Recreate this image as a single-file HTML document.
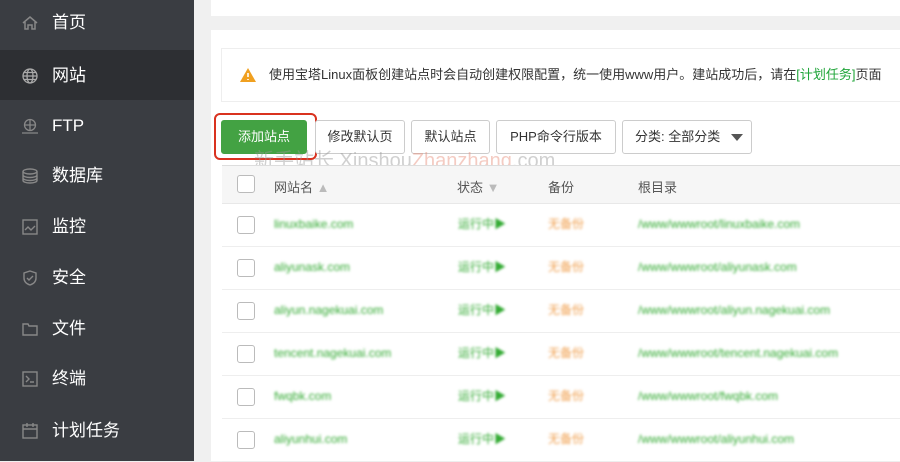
<!DOCTYPE html>
<html><head><meta charset="utf-8"><style>
*{margin:0;padding:0;box-sizing:border-box}
body{width:900px;height:461px;overflow:hidden;background:#f0f0f0;font-family:"Liberation Sans","Noto Sans CJK SC",sans-serif;position:relative}
.side{position:absolute;left:0;top:0;width:194px;height:461px;background:#3a3d42}
.item{position:absolute;left:0;width:194px;height:50px;color:#fff;font-size:17px}
.item span{position:absolute;left:52px;top:14px;line-height:24px}
.item svg{position:absolute;left:22px;top:18px}
.act{background:#2d2f33}
.p1{position:absolute;left:211px;top:0;width:689px;height:16px;background:#fff}
.p2{position:absolute;left:211px;top:30px;width:689px;height:431px;background:#fff}
.alert{position:absolute;left:221px;top:48px;width:679px;height:54px;border:1px solid #eee;border-right:none;background:#fff;font-size:13px;color:#333;padding-left:47px;line-height:52px;white-space:nowrap;overflow:hidden}
.btn{position:absolute;top:120px;height:34px;border:1px solid #ccc;border-radius:3px;background:#fff;font-size:13px;color:#333;line-height:32px;text-align:center}
.hdr{position:absolute;left:222px;top:165px;width:678px;height:39px;background:#f6f6f6;border-top:1px solid #ddd;border-bottom:1px solid #e8e8e8;font-size:13px;color:#555}
.row{position:absolute;left:222px;width:678px;height:43px;border-bottom:1px solid #eee;font-size:12px}
.cb{position:absolute;left:15px;width:18px;height:18px;border:1px solid #bbb;border-radius:3px;background:#fff}
.bl{position:absolute;top:12px;line-height:16px;filter:blur(1.3px);white-space:nowrap}
</style></head><body>
<div class="side">
<div class="item" style="top:-3px"><svg width="16" height="16" viewBox="0 0 16 16" fill="none" stroke="#888" stroke-width="1.5"><path d="M1 8L8 2l7 6M3 7v7h3v-4h4v4h3V7"/></svg><span>首页</span></div>
<div class="item act" style="top:50px"><svg width="16" height="16" viewBox="0 0 16 16" fill="none" stroke="#aaa" stroke-width="1.3"><circle cx="8" cy="8" r="7"/><ellipse cx="8" cy="8" rx="3" ry="7"/><path d="M1 8h14M2 4.5h12M2 11.5h12"/></svg><span>网站</span></div>
<div class="item" style="top:100px"><svg width="16" height="16" viewBox="0 0 16 16" fill="none" stroke="#888" stroke-width="1.3"><circle cx="8" cy="7" r="5.5"/><path d="M2.5 7h11M8 1.5v11M0 15h16"/></svg><span>FTP</span></div>
<div class="item" style="top:150px"><svg width="16" height="16" viewBox="0 0 16 16" fill="none" stroke="#888" stroke-width="1.4"><ellipse cx="8" cy="3.5" rx="7" ry="2.5"/><path d="M1 3.5v9c0 1.4 3 2.5 7 2.5s7-1.1 7-2.5v-9M1 7c0 1.4 3 2.5 7 2.5s7-1.1 7-2.5M1 10c0 1.4 3 2.5 7 2.5s7-1.1 7-2.5"/></svg><span>数据库</span></div>
<div class="item" style="top:201px"><svg width="16" height="16" viewBox="0 0 16 16" fill="none" stroke="#888" stroke-width="1.4"><rect x="1" y="1" width="14" height="14"/><path d="M3 11l3-3 3 3 4-4"/></svg><span>监控</span></div>
<div class="item" style="top:252px"><svg width="16" height="16" viewBox="0 0 16 16" fill="none" stroke="#888" stroke-width="1.4"><path d="M8 1l6 2v5c0 4-3 6-6 7-3-1-6-3-6-7V3z"/><path d="M5 8l2 2 4-4"/></svg><span>安全</span></div>
<div class="item" style="top:303px"><svg width="16" height="16" viewBox="0 0 16 16" fill="none" stroke="#888" stroke-width="1.4"><path d="M1 3h5l1 2h8v9H1z"/></svg><span>文件</span></div>
<div class="item" style="top:353px"><svg width="16" height="16" viewBox="0 0 16 16" fill="none" stroke="#888" stroke-width="1.4"><rect x="1" y="1" width="14" height="14"/><path d="M4 5l3 3-3 3M8 11h4"/></svg><span>终端</span></div>
<div class="item" style="top:405px"><svg width="16" height="16" viewBox="0 0 16 16" fill="none" stroke="#888" stroke-width="1.4"><rect x="1" y="2" width="14" height="13"/><path d="M1 6h14M5 0v4M11 0v4"/></svg><span>计划任务</span></div>
</div>
<div class="p1"></div><div class="p2"></div>
<div class="alert"><svg style="position:absolute;left:18px;top:19px" width="16" height="14" viewBox="0 0 16 14"><path d="M8 0L16 14H0z" fill="#f0a020"/><path d="M8 5v4M8 11v1" stroke="#fff" stroke-width="1.6"/></svg>使用宝塔Linux面板创建站点时会自动创建权限配置，统一使用www用户。建站成功后，请在<span style="color:#20a53a">[计划任务]</span>页面</div>
<div style="position:absolute;left:214px;top:113px;width:103px;height:47px;border:2px solid #d9321f;border-radius:6px"></div>
<div class="btn" style="left:221px;width:86px;background:#43a243;border-color:#43a243;color:#fff">添加站点</div>
<div class="btn" style="left:315px;width:90px">修改默认页</div>
<div class="btn" style="left:411px;width:79px">默认站点</div>
<div class="btn" style="left:496px;width:120px">PHP命令行版本</div>
<div class="btn" style="left:622px;width:130px;text-align:left;padding-left:12px">分类: 全部分类 <span style="position:absolute;right:8px;top:13px;border:6px solid transparent;border-top:7px solid #555;border-bottom:none"></span></div>
<div style="position:absolute;left:254px;top:144px;font-size:20px;color:rgba(150,150,150,.45);white-space:nowrap">新手站长 Xinshou<span style="color:rgba(230,140,120,.45)">Zhanzhang</span>.com</div>
<div class="hdr"><div class="cb" style="top:9px"></div>
<span style="position:absolute;left:52px;top:11px">网站名 <span style="color:#bbb">▲</span></span>
<span style="position:absolute;left:235px;top:11px">状态 <span style="color:#bbb">▼</span></span>
<span style="position:absolute;left:326px;top:11px">备份</span>
<span style="position:absolute;left:416px;top:11px">根目录</span></div>
<div class="row" style="top:204px"><div class="cb" style="top:12px"></div><span class="bl" style="left:52px;color:#3a3">linuxbaike.com</span><span class="bl" style="left:236px;color:#3a3">运行中▶</span><span class="bl" style="left:326px;color:#f0a050">无备份</span><span class="bl" style="left:416px;color:#3a3">/www/wwwroot/linuxbaike.com</span></div>
<div class="row" style="top:247px"><div class="cb" style="top:12px"></div><span class="bl" style="left:52px;color:#3a3">aliyunask.com</span><span class="bl" style="left:236px;color:#3a3">运行中▶</span><span class="bl" style="left:326px;color:#f0a050">无备份</span><span class="bl" style="left:416px;color:#3a3">/www/wwwroot/aliyunask.com</span></div>
<div class="row" style="top:290px"><div class="cb" style="top:12px"></div><span class="bl" style="left:52px;color:#3a3">aliyun.nagekuai.com</span><span class="bl" style="left:236px;color:#3a3">运行中▶</span><span class="bl" style="left:326px;color:#f0a050">无备份</span><span class="bl" style="left:416px;color:#3a3">/www/wwwroot/aliyun.nagekuai.com</span></div>
<div class="row" style="top:333px"><div class="cb" style="top:12px"></div><span class="bl" style="left:52px;color:#3a3">tencent.nagekuai.com</span><span class="bl" style="left:236px;color:#3a3">运行中▶</span><span class="bl" style="left:326px;color:#f0a050">无备份</span><span class="bl" style="left:416px;color:#3a3">/www/wwwroot/tencent.nagekuai.com</span></div>
<div class="row" style="top:376px"><div class="cb" style="top:12px"></div><span class="bl" style="left:52px;color:#3a3">fwqbk.com</span><span class="bl" style="left:236px;color:#3a3">运行中▶</span><span class="bl" style="left:326px;color:#f0a050">无备份</span><span class="bl" style="left:416px;color:#3a3">/www/wwwroot/fwqbk.com</span></div>
<div class="row" style="top:419px"><div class="cb" style="top:12px"></div><span class="bl" style="left:52px;color:#3a3">aliyunhui.com</span><span class="bl" style="left:236px;color:#3a3">运行中▶</span><span class="bl" style="left:326px;color:#f0a050">无备份</span><span class="bl" style="left:416px;color:#3a3">/www/wwwroot/aliyunhui.com</span></div>
</body></html>
